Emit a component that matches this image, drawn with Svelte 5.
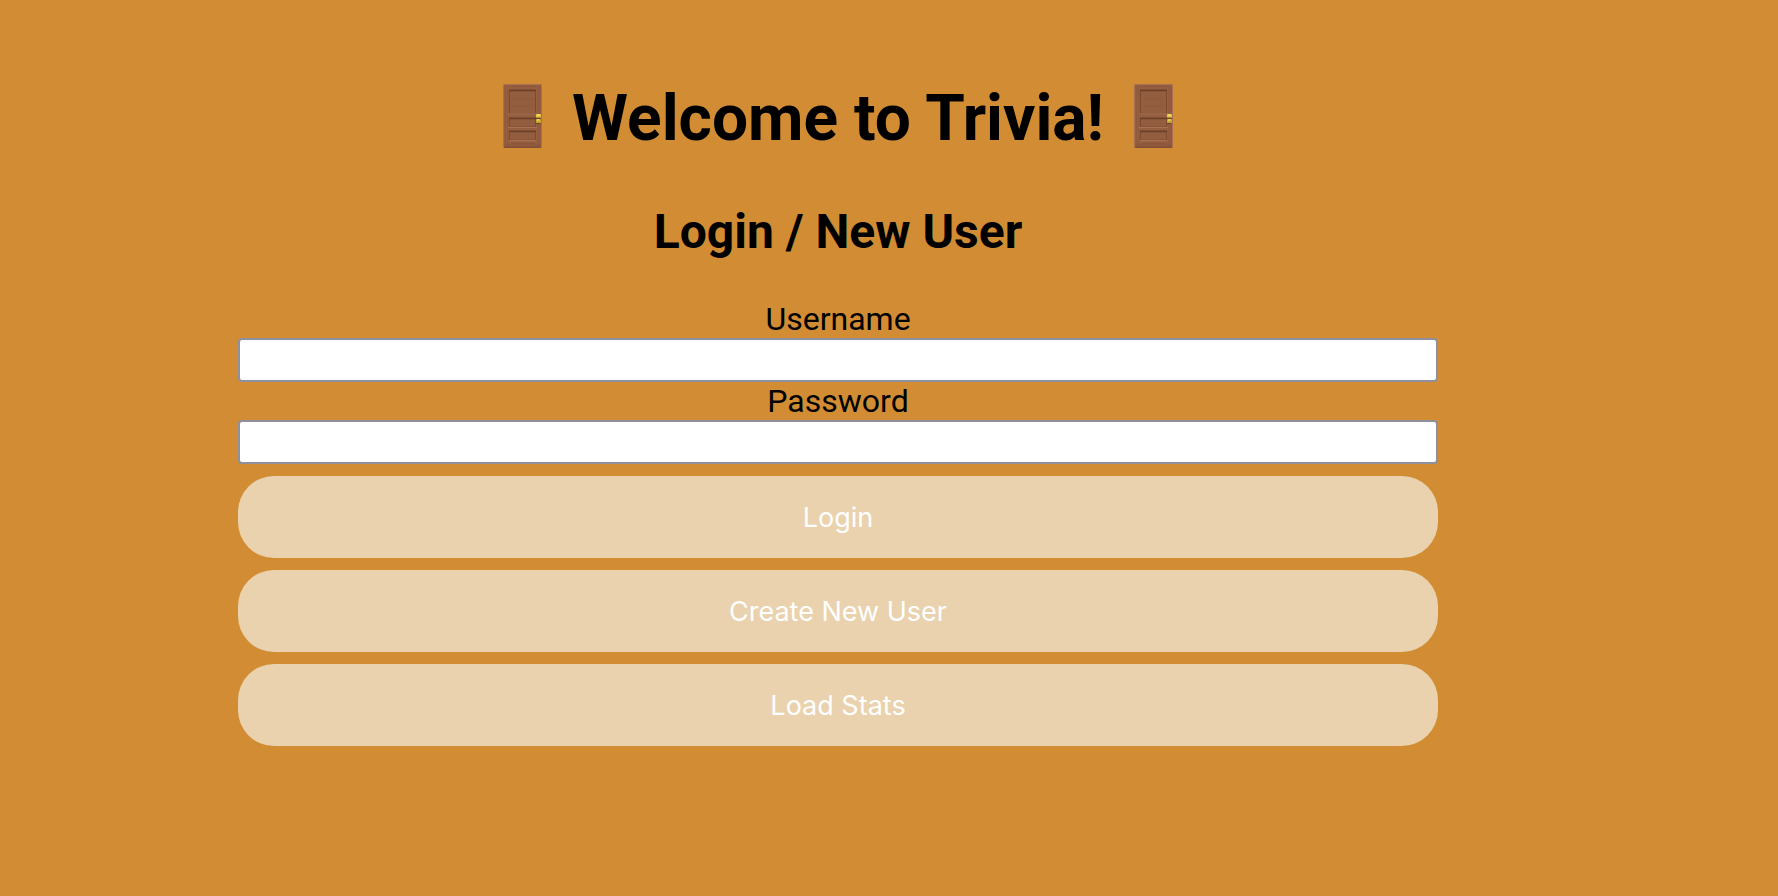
<script>
    let username = '';
    let password = '';
</script>

{#snippet door()}
    <svg class="door" viewBox="0 0 39 64" aria-hidden="true">
        <rect x="0.5" y="0.5" width="38" height="63" rx="1" fill="#965f41" stroke="#a8704f" />
        <path d="M1 63.2h37" stroke="#704229" />
        <path d="M2.5 2v60M5 2v60M35 2v60M37 2v60" stroke="#8a563b" stroke-width="0.6" />
        <path d="M7 2.5h26M8 59.5h25M3 61h33" stroke="#885238" stroke-width="0.7" />
        <!-- the three sunken panels -->
        <rect x="6.5" y="6" width="26" height="24" fill="#935d3f" stroke="#7d4b32" />
        <rect x="6.5" y="34" width="26" height="9" fill="#935d3f" stroke="#7d4b32" />
        <rect x="6.5" y="47" width="26" height="9" fill="#935d3f" stroke="#7d4b32" />
        <path d="M6 6.5h27M6 34.5h27M6 47.5h27" stroke="#6b402a" stroke-width="1.6" />
        <path d="M5 30h29M5 43.5h29M6 56.5h27" stroke="#aa7252" />
        <path d="M9 15h21M9 22h21" stroke="#8b573b" stroke-width="0.6" />
        <rect x="33" y="34" width="4.5" height="6" fill="#6b4029" />
        <rect x="33" y="30" width="5" height="3.6" rx="0.6" fill="#e0c23c" />
        <rect x="33" y="35" width="5" height="4" rx="0.6" fill="#c7a62f" />
        <path d="M34 31h3M34 36h2.500" stroke="#fff07b" />
    </svg>
{/snippet}

<main>
    <h1>{@render door()} Welcome to Trivia! {@render door()}</h1>
    <h2>Login / New User</h2>

    <form on:submit|preventDefault>
        <label for="username">Username</label>
        <input id="username" type="text" bind:value={username}>
        <label for="password">Password</label>
        <input id="password" type="password" bind:value={password}>
        <button type="submit">Login</button>
        <button type="button">Create New User</button>
        <button type="button">Load Stats</button>
    </form>
</main>

<style>
    :global(body) {
        margin: 0;
        background-color: #d28d34;
    }

    main {
        max-width: 1200px;
        margin: 0 auto;
        padding: 80px 102px 40px 0;
        font-family: Roboto, sans-serif;
        font-size: 32px;
        color: #000;
        text-align: center;
    }

    h1 {
        margin: 0 0 46px;
        font-size: 64px;
        line-height: 78px;
    }

    .door {
        width: 39px;
        height: 64px;
        margin: 0 14px;
        vertical-align: -8px;
    }

    h2 {
        margin: 0 0 40px;
        font-size: 48px;
        line-height: 56px;
    }

    form {
        display: flex;
        flex-direction: column;
    }

    label {
        line-height: 38px;
    }

    input {
        box-sizing: border-box;
        width: 100%;
        height: 44px;
        padding: 2px 4px;
        border: 2px solid #8f8f9d;
        border-radius: 4px;
        background-color: #fff;
        font-size: 28px;
    }

    button {
        margin-top: 12px;
        padding: 25px 24px 23px;
        border: none;
        border-radius: 36px;
        background-color: #e9d2ad;
        color: #fff;
        font-family: Inter, sans-serif;
        font-size: 27px;
        line-height: 34px;
        cursor: pointer;
    }
</style>
